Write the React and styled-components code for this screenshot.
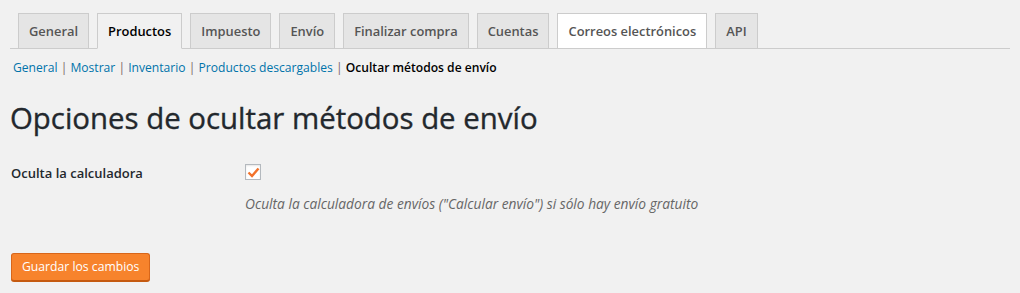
import { createGlobalStyle, styled } from "styled-components";

const GlobalStyle = createGlobalStyle`
  html, body {
    margin: 0;
    padding: 0;
    background: #f1f1f1;
  }
  body {
    font-family: "Open Sans", "Noto Sans", sans-serif;
    color: #23282d;
  }
`;

const Wrap = styled.div`
  padding: 13px 0 0 10px;
  width: 1010px;
  height: 293px;
  box-sizing: border-box;
`;

const TabBar = styled.nav`
  display: flex;
  gap: 8px;
  padding-left: 8px;
  border-bottom: 1px solid #ccc;
  height: 35px;
  align-items: flex-start;
`;

const Tab = styled.a`
  display: block;
  box-sizing: border-box;
  height: 36px;
  padding: 5px 10px;
  font-size: 12.9px;
  font-weight: 600;
  line-height: 24px;
  text-decoration: none;
  border: 1px solid #ccc;
  background: ${(p) => (p.$state === "active" ? "#f1f1f1" : p.$state === "hover" ? "#fff" : "#e5e5e5")};
  border-bottom-color: ${(p) => (p.$state === "active" ? "#f1f1f1" : "#ccc")};
  color: ${(p) => (p.$state === "active" ? "#000" : "#555")};
  white-space: nowrap;
`;

const SubNav = styled.ul`
  display: flex;
  list-style: none;
  margin: 0;
  padding: 9px 0 0 3px;
  font-size: 12.1px;
  line-height: 20px;
  white-space: pre;
`;

const SubItem = styled.li`
  color: #7a6464;
`;

const SubLink = styled.a`
  color: ${(p) => (p.$current ? "#000" : "#0073aa")};
  font-weight: ${(p) => (p.$current ? 600 : 400)};
  text-decoration: none;
`;

const Heading = styled.h2`
  margin: 20px 0 0 0;
  font-size: 29.4px;
  font-weight: 400;
  line-height: 40px;
  color: #23282d;
  -webkit-text-stroke: 0.35px #23282d;
`;

const FormRow = styled.div`
  display: grid;
  grid-template-columns: 234px 1fr;
  margin-top: 25px;
`;

const Label = styled.label`
  font-size: 13px;
  font-weight: 600;
  line-height: 20px;
  padding: 0 0 0 1px;
  color: #23282d;
`;

const Field = styled.div`
  display: flex;
  flex-direction: column;
  gap: 14px;
`;

const Check = styled.span`
  display: flex;
  align-items: center;
  justify-content: center;
  width: 16px;
  height: 16px;
  box-sizing: border-box;
  border: 1px solid #b4b9be;
  background: #fff;
  margin: 1px 0 0 1px;
  box-shadow: inset 0 1px 2px rgba(0, 0, 0, 0.1);
`;

const Description = styled.p`
  margin: 0 0 0 1px;
  font-size: 13.75px;
  font-style: italic;
  line-height: 20px;
  color: #666;
`;

const SaveButton = styled.button`
  display: block;
  margin: 39px 0 0 1px;
  height: 28px;
  padding: 0 10px 1px;
  font-family: inherit;
  font-size: 12.2px;
  line-height: 26px;
  color: #fff;
  background: #f7832c;
  border: 1px solid #d8661a;
  border-bottom-color: #c55a10;
  border-radius: 3px;
  box-shadow: 0 1px 0 #c55a10;
  cursor: pointer;
`;

const tabs = [
  ["General", "inactive"],
  ["Productos", "active"],
  ["Impuesto", "inactive"],
  ["Envío", "inactive"],
  ["Finalizar compra", "inactive"],
  ["Cuentas", "inactive"],
  ["Correos electrónicos", "hover"],
  ["API", "inactive"],
];

const sections = ["General", "Mostrar", "Inventario", "Productos descargables"];

export default function App() {
  return (
    <>
      <GlobalStyle />
      <Wrap>
        <TabBar>
          {tabs.map(([name, state]) => (
            <Tab key={name} href="#" $state={state}>
              {name}
            </Tab>
          ))}
        </TabBar>

        <SubNav>
          {sections.map((s) => (
            <SubItem key={s}>
              <SubLink href="#">{s}</SubLink>
              {" | "}
            </SubItem>
          ))}
          <SubItem>
            <SubLink href="#" $current>
              Ocultar métodos de envío
            </SubLink>
          </SubItem>
        </SubNav>

        <Heading>Opciones de ocultar métodos de envío</Heading>

        <FormRow>
          <Label>Oculta la calculadora</Label>
          <Field>
            <Check>
              <svg width="13" height="11" viewBox="0 0 13 11">
                <path d="M1.5 5.5 L5 9 L11.5 1.5" fill="none" stroke="#f2722b" strokeWidth="2.4" />
              </svg>
            </Check>
            <Description>
              Oculta la calculadora de envíos ("Calcular envío") si sólo hay envío gratuito
            </Description>
          </Field>
        </FormRow>

        <SaveButton>Guardar los cambios</SaveButton>
      </Wrap>
    </>
  );
}
